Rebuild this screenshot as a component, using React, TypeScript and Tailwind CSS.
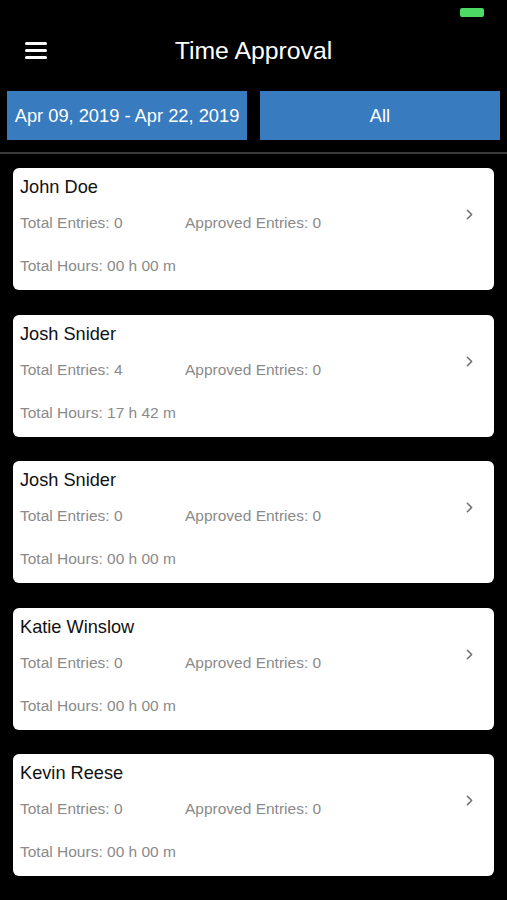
import { ChevronRight } from "lucide-react";

const employees = [
  { name: "John Doe", total: 0, approved: 0, hours: "00 h 00 m" },
  { name: "Josh Snider", total: 4, approved: 0, hours: "17 h 42 m" },
  { name: "Josh Snider", total: 0, approved: 0, hours: "00 h 00 m" },
  { name: "Katie Winslow", total: 0, approved: 0, hours: "00 h 00 m" },
  { name: "Kevin Reese", total: 0, approved: 0, hours: "00 h 00 m" },
];

const EmployeeCard = ({ name, total, approved, hours }: (typeof employees)[number]) => (
  <div className="relative h-[122px] rounded-[6px] bg-white pl-[7px] pt-[8px]">
    <div className="text-[18.2px] leading-[22px] text-[#111]">{name}</div>
    <div className="mt-[15px] flex text-[15.5px] leading-[20px] text-[#8a8a8a]">
      <span className="w-[165px]">Total Entries: {total}</span>
      <span>Approved Entries: {approved}</span>
    </div>
    <div className="mt-[23px] text-[15.5px] leading-[20px] text-[#8a8a8a]">Total Hours: {hours}</div>
    <ChevronRight className="absolute right-[16px] top-[38px] h-[17px] w-[17px] text-[#6f6f6f]" strokeWidth={2.25} />
  </div>
);

const App = () => {
  return (
    <div className="min-h-[900px] w-[507px] bg-black font-['Liberation_Sans',Arial,sans-serif] text-white">
      {/* Status bar */}
      <div className="flex h-[26px] justify-end pr-[23px] pt-[8px]">
        <div className="h-[9px] w-[24px] rounded-[2px] bg-[#4cd964]" />
      </div>

      {/* Header */}
      <div className="relative flex h-[50px] items-center justify-center">
        <div className="absolute left-[25px] top-[16px] flex w-[22px] flex-col gap-[4px]">
          <span className="h-[3px] rounded-full bg-white" />
          <span className="h-[3px] rounded-full bg-white" />
          <span className="h-[3px] rounded-full bg-white" />
        </div>
        <h1 className="text-[24.8px] leading-none">Time Approval</h1>
      </div>

      {/* Filters */}
      <div className="mt-[15px] flex gap-[13px] px-[7px]">
        <button className="h-[49px] w-[240px] bg-[#397bbf] text-[18.3px] text-white">Apr 09, 2019 - Apr 22, 2019</button>
        <button className="h-[49px] flex-1 bg-[#397bbf] text-[18.3px] text-white">All</button>
      </div>

      <div className="mt-[12px] h-[2px] bg-[#3a3a3a]" />

      {/* List */}
      <div className="flex flex-col gap-[24.6px] px-[13px] pt-[14px] pb-[20px]">
        {employees.map((e, i) => (
          <EmployeeCard key={i} {...e} />
        ))}
      </div>
    </div>
  );
};

export default App;
